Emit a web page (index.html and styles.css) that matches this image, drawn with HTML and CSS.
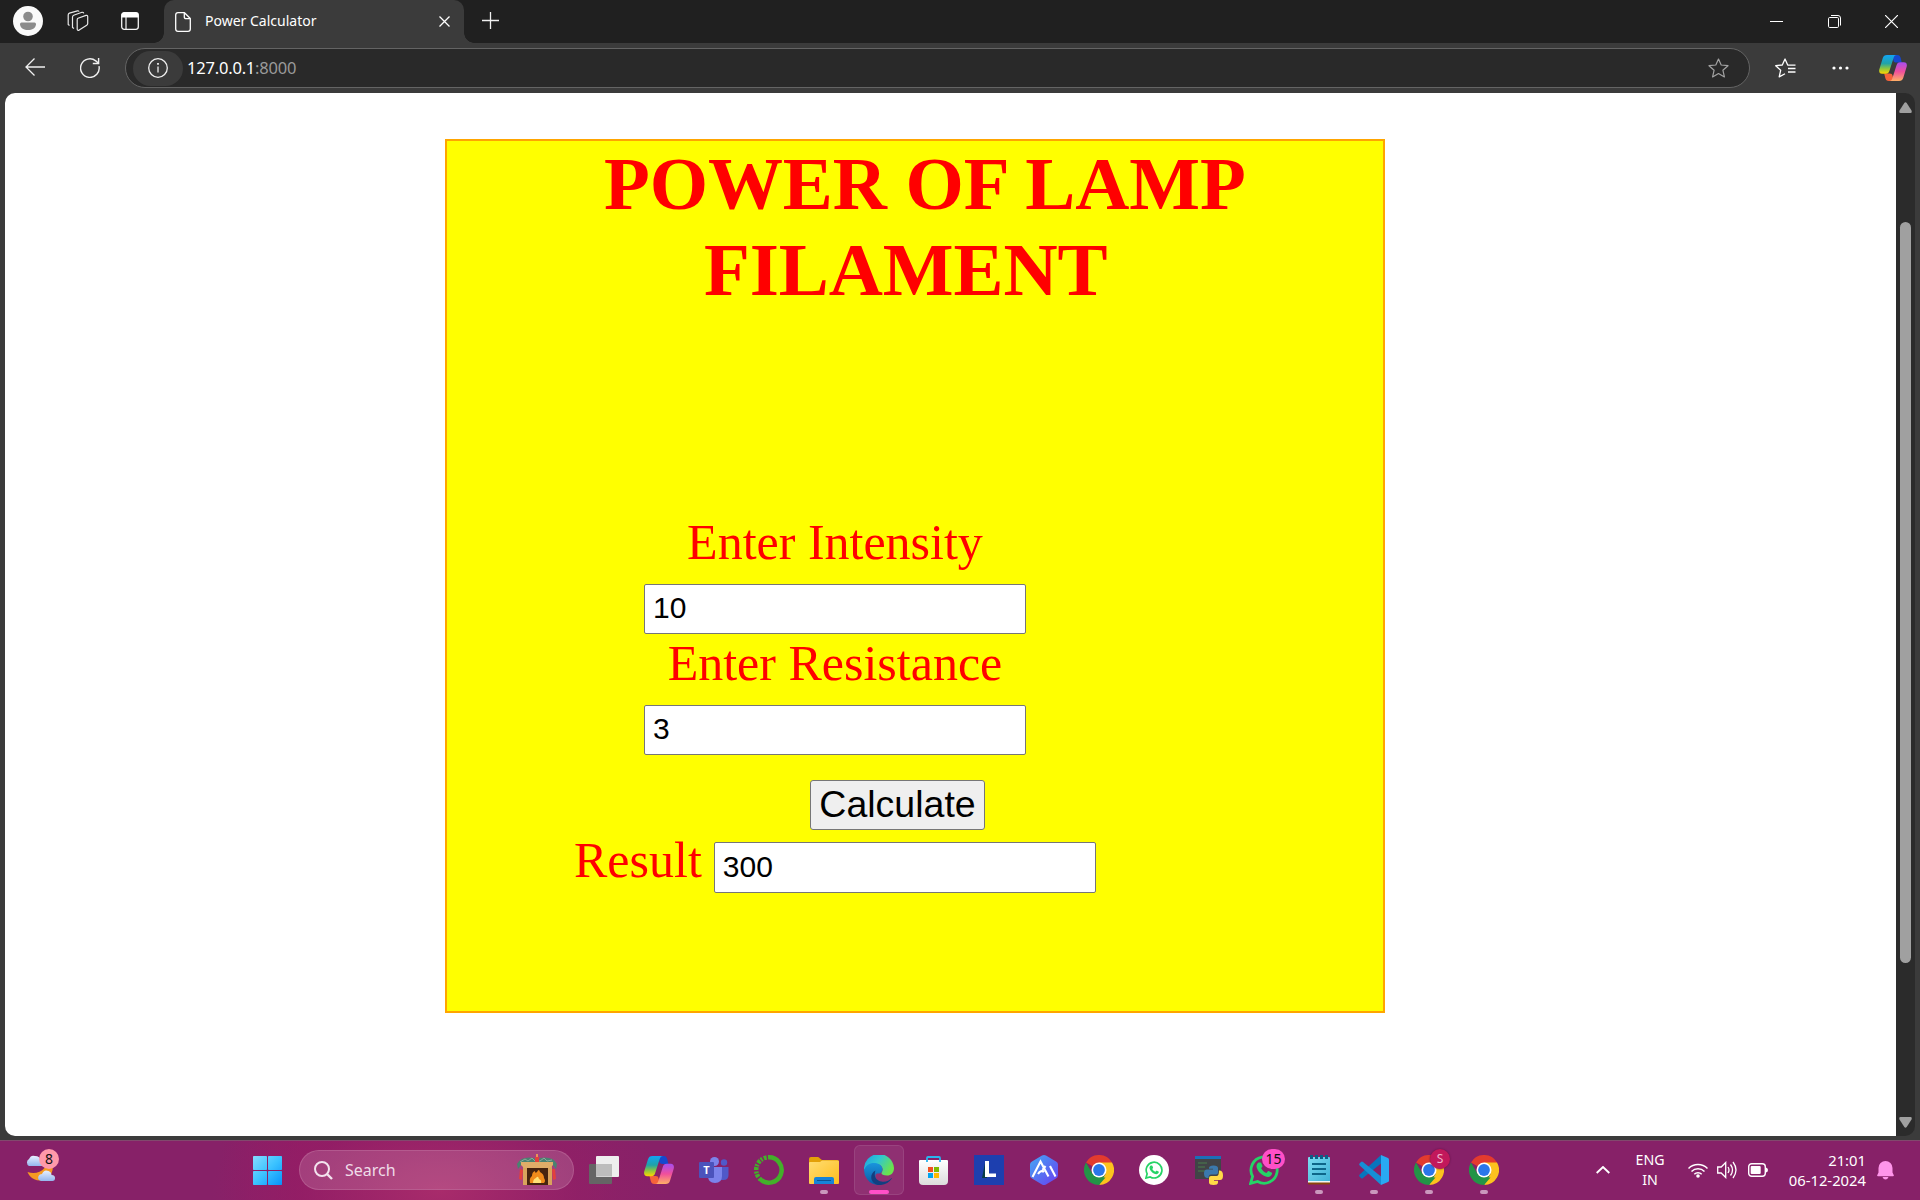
FILE: index.html
```html
<!DOCTYPE html>
<html lang="en">
<head>
<meta charset="utf-8">
<title>Power Calculator</title>
<link rel="stylesheet" href="styles.css">
</head>
<body>
<svg class="defs" aria-hidden="true">
  <defs>
    <linearGradient id="cpA" x1="0" y1="0" x2="0" y2="1"><stop offset="0" stop-color="#12a4f4"/><stop offset=".45" stop-color="#20a3a8"/><stop offset=".72" stop-color="#8cc63f"/><stop offset="1" stop-color="#ffd500"/></linearGradient>
    <linearGradient id="cpB" x1="0" y1="0" x2="0" y2="1"><stop offset="0" stop-color="#a64df0"/><stop offset=".5" stop-color="#f04f9c"/><stop offset="1" stop-color="#ffb066"/></linearGradient>
    <linearGradient id="edA" x1="0" y1="0" x2="1" y2=".5"><stop offset="0" stop-color="#1b9de2"/><stop offset=".5" stop-color="#30c6d2"/><stop offset="1" stop-color="#6be34d"/></linearGradient>
    <linearGradient id="edB" x1="0" y1="0" x2="0" y2="1"><stop offset="0" stop-color="#1995dd"/><stop offset="1" stop-color="#0c59a4"/></linearGradient>
    <linearGradient id="win" gradientUnits="userSpaceOnUse" x1="0" y1="0" x2="29" y2="29"><stop offset="0" stop-color="#86dcff"/><stop offset=".5" stop-color="#3cc3ff"/><stop offset="1" stop-color="#0791fb"/></linearGradient>
    <linearGradient id="hex" x1="0" y1="0" x2="1" y2="1"><stop offset="0" stop-color="#42a9f5"/><stop offset="1" stop-color="#6a3df0"/></linearGradient>
    <linearGradient id="fold" x1="0" y1="0" x2="1" y2="1"><stop offset="0" stop-color="#ffdd73"/><stop offset="1" stop-color="#ffbd1c"/></linearGradient>
    <linearGradient id="note" x1="0" y1="0" x2="1" y2="1"><stop offset="0" stop-color="#7cdcf2"/><stop offset="1" stop-color="#3fb2d6"/></linearGradient>
    <linearGradient id="cloud" x1="0" y1="0" x2="0" y2="1"><stop offset="0" stop-color="#e9f1ff"/><stop offset="1" stop-color="#94b6ee"/></linearGradient>
    <linearGradient id="bag" x1="0" y1="0" x2="0" y2="1"><stop offset="0" stop-color="#fff"/><stop offset="1" stop-color="#dcdcdc"/></linearGradient>
  </defs>
  <symbol id="copilot" viewBox="0 0 30 28">
    <path d="M16 0h3.500c2.300 0 3.200 1.200 3.800 3.300L24.400 8h-5.700c-2 0-2.900-.7-3.200-2.200L14.600 2z" fill="#1648cf"/>
    <path d="M13.500 28h-3c-2.300 0-3.200-1.200-3.800-3.300L5.500 20h6c2 0 2.700.9 3 2.200l1 4z" fill="#f5623a"/>
    <path d="M8.500 0H19c-2 0-2.800 1.300-3.400 3.300L11.200 17c-.7 2.200-1.700 3.200-4 3.200H3.300C.5 20.200-.4 18 .3 15.300L4 3.300C4.700 1.200 6 0 8.500 0z" fill="url(#cpA)"/>
    <path d="M21.500 28H11c2 0 2.800-1.300 3.400-3.300L18.800 11c.7-2.200 1.700-3.200 4-3.200h3.900c2.800 0 3.700 2.200 3 4.900L26 24.700c-.7 2.100-2 3.300-4.500 3.300z" fill="url(#cpB)"/>
  </symbol>
  <symbol id="chrome" viewBox="0 0 30 30">
    <path d="M15 15L2 7.500A15 15 0 0 1 28 7.500z" fill="#e33b2e"/>
    <path d="M15 7.500H28A15 15 0 0 1 15 30L21.500 18.800z" fill="#fcc31e"/>
    <path d="M2 7.500L8.500 18.800 15 22.500h6.500L15 30A15 15 0 0 1 2 7.500z" fill="#239447"/>
    <path d="M21.500 18.700L15 30l-2-8z" fill="#239447"/>
    <circle cx="15" cy="15" r="7.500" fill="#fff"/><circle cx="15" cy="15" r="5.900" fill="#2a76ea"/>
  </symbol>
  <symbol id="whatsapp" viewBox="0 0 30 30">
    <path d="M1.600 28.400l2-7A13.100 13.100 0 1 1 8.600 26.500z" fill="none" stroke="#25d366" stroke-width="2.800"/>
    <path d="M9.500 7.500h2c.5 0 .7.400.9.900l1 2.400c.2.500 0 .9-.3 1.300l-1 1.200c1.400 2.400 3 3.700 5.300 4.700l1.300-1.600c.4-.4.800-.4 1.300-.2l2.500 1.200c.6.300.7.600.5 1.400-.4 2-2.400 3.300-4.300 3.100-5.200-.7-9.800-5.200-11-9.500-.5-2 .4-3.900 1.800-4.900z" fill="#25d366"/>
  </symbol>
</svg>

<div class="window">
  <header class="tabbar">
    <div class="tab-tools">
      <svg width="30" height="30" viewBox="0 0 30 30"><circle cx="15" cy="15" r="15" fill="#fafafa"/><circle cx="15" cy="10.500" r="4.800" fill="#8b8b8b"/><path d="M8.500 16.500h13q1.500 0 1.500 1.700C22.500 22.500 19 24 15 24s-7.500-1.500-8-5.800q0-1.700 1.500-1.700z" fill="#8b8b8b"/></svg>
      <svg class="ws" width="22" height="22" viewBox="0 0 22 22" fill="none" stroke="#e8e8e8" stroke-width="1.200" stroke-linejoin="round"><path d="M11 8.300l8-2.900q1.700-.4 1.700 1.200v6.800q0 1.200-1 1.800l-7.500 4.900q-2 .9-2-1V9.800q0-1.200.8-1.500z"/><path d="M7 18.500l-1.500-1V7.200q0-1.500 1.200-2L15 2.300q1.500-.3 1.700 1"/><path d="M2.500 15.500L1.200 14.500V5q0-1.400 1.200-1.900L10.500.8q1.300-.3 1.300.9"/></svg>
      <svg class="vt" width="18" height="18" viewBox="0 0 18 18"><rect x=".7" y=".7" width="16.600" height="16.600" rx="2.500" fill="none" stroke="#f4f4f4" stroke-width="1.300"/><path d="M.5 5.500V3Q.5.500 3 .5h12q2.500 0 2.500 2.500v2.500z" fill="#fff"/><path d="M5 5v12" stroke="#f4f4f4" stroke-width="1.200"/></svg>
    </div>
    <div class="tab">
      <svg width="16" height="20" viewBox="0 0 16 20" fill="none" stroke="#fff" stroke-width="1.300" stroke-linejoin="round"><path d="M3 .7h6.500L15.300 6.500V17q0 2.300-2.300 2.300H3Q.7 19.300.7 17V3Q.7.700 3 .7z"/><path d="M9.300.9V5q0 1.700 1.700 1.700h4"/></svg>
      <span class="tab-title">Power Calculator</span>
      <svg class="tab-close" width="11" height="11" viewBox="0 0 11 11" stroke="#fff" stroke-width="1.300"><path d="M.5.500l10 10M10.500.500l-10 10"/></svg>
    </div>
    <svg class="new-tab" width="17" height="17" viewBox="0 0 17 17" stroke="#f0f0f0" stroke-width="1.300"><path d="M8.500 0v17M0 8.500h17"/></svg>
    <div class="caption">
      <svg width="13" height="13" viewBox="0 0 13 13" stroke="#fff"><path d="M0 6.500h13"/></svg>
      <svg width="13" height="13" viewBox="0 0 13 13" fill="none" stroke="#fff"><rect x=".5" y="2.500" width="10" height="10" rx="1.200"/><path d="M3 .5h7q2.500 0 2.500 2.500v7.500"/></svg>
      <svg width="13" height="13" viewBox="0 0 13 13" stroke="#fff" stroke-width="1.200"><path d="M0 0l13 13M13 0L0 13"/></svg>
    </div>
  </header>

  <nav class="toolbar">
    <svg class="back" width="20" height="18" viewBox="0 0 20 18" fill="none" stroke="#f0f0f0" stroke-width="1.300"><path d="M20 9H1M9.500.5L1 9l8.500 8.500"/></svg>
    <svg class="reload" width="20" height="20" viewBox="0 0 20 20" fill="none" stroke="#f0f0f0" stroke-width="1.400"><path d="M19 8.200A9.300 9.300 0 1 1 15.800 2.900L18.500 5.300"/><path d="M18.600 0v5.500h-5.800"/></svg>
    <div class="address">
      <div class="info"><svg width="20" height="20" viewBox="0 0 20 20" fill="none" stroke="#f0f0f0" stroke-width="1.300"><circle cx="10" cy="10" r="9.300"/><path d="M10 8.500v6"/><path d="M10 5v1.800" stroke-width="1.800"/></svg></div>
      <span class="url">127.0.0.1<span class="port">:8000</span></span>
      <svg class="fav" width="21" height="20" viewBox="0 0 21 20" fill="none" stroke="#a2a2a2" stroke-width="1.200" stroke-linejoin="round"><path d="M10.500 1l2.700 6 6.800.7-5.100 4.500 1.500 6.700-5.900-3.400-5.900 3.400 1.500-6.700L1 7.700 7.800 7z"/></svg>
    </div>
    <svg class="favs" width="21" height="20" viewBox="0 0 21 20" fill="none" stroke="#fff" stroke-width="1.300" stroke-linejoin="round"><path d="M14.500 7.100L12.700 7 10 1 7.300 7 .7 7.700l5 4.500-1.500 6.700L10 15.700M13 10.500h7.500M14 7.200l6.500 0M13 14h7.500"/></svg>
    <svg class="more" width="17" height="4" viewBox="0 0 17 4" fill="#fff"><circle cx="2" cy="2" r="1.600"/><circle cx="8.500" cy="2" r="1.600"/><circle cx="15" cy="2" r="1.600"/></svg>
    <svg class="cp" width="28" height="26"><use href="#copilot"/></svg>
  </nav>

  <div class="viewport">
    <main class="page">
      <section class="box">
        <h1><span class="line1">POWER OF LAMP</span><span class="line2">FILAMENT</span></h1>
        <form class="form">
          <label for="i">Enter Intensity</label>
          <input id="i" type="text" value="10">
          <label for="r">Enter Resistance</label>
          <input id="r" type="text" value="3">
        </form>
        <button type="button">Calculate</button>
        <div class="result"><label for="p">Result</label><input id="p" type="text" value="300"></div>
      </section>
    </main>
    <div class="scrollbar">
      <svg width="13" height="11" viewBox="0 0 13 11" fill="#a0a0a0"><path d="M5.300 1Q6.500-.5 7.700 1L12.500 8.500Q13.300 11 11.500 11h-10Q-.3 11 .5 8.500z"/></svg>
      <div class="thumb"></div>
      <svg width="13" height="11" viewBox="0 0 13 11" fill="#a0a0a0"><path d="M5.300 10Q6.500 11.500 7.700 10L12.500 2.500Q13.300 0 11.500 0h-10Q-.3 0 .5 2.500z"/></svg>
    </div>
  </div>

  <footer class="taskbar">
    <div class="weather">
      <svg width="32" height="30" viewBox="0 0 32 30"><path d="M27 10a13 13 0 0 1-24.500 9c6 2 13 1 17-4 2-2 3-4 3-7q5-4 4.500 2z" fill="#f59a22"/><path d="M4 13a4 4 0 0 1 0-7Q6 1.500 10 3q5 0 6 4.500 2 1 1.500 5.500z" fill="url(#cloud)"/><path d="M16 28q-4-1-2.500-5 1-2 3.500-2 2-5 6.500-3 3 1 3 4 4 0 3.500 4-.3 2-2.500 2z" fill="url(#cloud)"/></svg>
      <span class="badge pink8">8</span>
    </div>
    <svg class="start" width="29" height="29" viewBox="0 0 29 29" fill="url(#win)"><rect width="14" height="14" rx=".7"/><rect x="15" width="14" height="14" rx=".7"/><rect y="15" width="14" height="14" rx=".7"/><rect x="15" y="15" width="14" height="14" rx=".7"/></svg>
    <div class="search">
      <svg width="19" height="19" viewBox="0 0 19 19" fill="none" stroke="#f3e3ee" stroke-width="2"><circle cx="8" cy="8" r="7"/><path d="M13 13l5 5" stroke-width="2.400"/></svg>
      <span>Search</span>
      <svg class="fire" width="42" height="32" viewBox="0 0 42 32"><rect x="7" y="12" width="29" height="19" fill="#d9a35c"/><rect x="11" y="14" width="21" height="17" fill="#46240f"/><path d="M14 29q-1-5 2-7 0-4 3-5 0 3 2 1 2-4 3 0 4 2 4 6 2 3 0 5z" fill="#f08b1b"/><path d="M17 29q0-4 3-5 2-3 3 1 3 1 2 4z" fill="#ffe277"/><path d="M1 10Q5 2 18 4l3 4 3-4q13-2 17 6l-1 5-4-5H6l-4 5z" fill="#4a8270"/><path d="M5 8h32v3l-3 3H8l-3-3z" fill="#e0ad68"/><path d="M4 8l5-3 3 2 4-3 3 3h5l4-3 3 3 5-1" stroke="#8da89b" fill="none"/><path d="M19 3h4v5h-4zM4 15l3 1-1 10-3-1zM36 15h3l1 10-3 1z" fill="#e23f3c"/><path d="M21 0v3" stroke="#ffb04a" stroke-width="1.500"/></svg>
    </div>
    <div class="apps">
      <div class="app"><svg width="30" height="28" viewBox="0 0 30 28"><rect y="8" width="23" height="20" rx="1" fill="#656565"/><rect x="7" width="23" height="21" rx="1" fill="#eee"/><path d="M7 8h16v12.500H7z" fill="#bdbdbd"/></svg></div>
      <div class="app"><svg width="30" height="28"><use href="#copilot"/></svg></div>
      <div class="app"><svg width="30" height="28" viewBox="0 0 30 28"><circle cx="15.500" cy="5.500" r="4.500" fill="#7b83eb"/><circle cx="25" cy="6.500" r="3.200" fill="#5059c9"/><path d="M21 11h8.500v8q0 5-5 5H21z" fill="#5059c9"/><path d="M9 11h14v9q0 7-7 7t-7-7z" fill="#7b83eb"/><rect y="6" width="15" height="16" rx="1" fill="#4b53bc"/><text x="7.500" y="17.500" text-anchor="middle" font-family="Open Sans" font-weight="700" font-size="11" fill="#fff">T</text></svg></div>
      <div class="app"><svg width="30" height="30" viewBox="0 0 30 30" fill="none" stroke="#43b02a" stroke-width="4.500"><path d="M14 2.300A12.700 12.700 0 1 1 6 24"/><path d="M6.500 24.500A12.700 12.700 0 0 1 13 2.400" stroke-dasharray="1.800 1.500 3 1"/></svg></div>
      <div class="app open"><svg width="30" height="28" viewBox="0 0 30 28"><path d="M0 3q0-2 2-2h7q1 0 2 1.500L13 4h15q2 0 2 2v6H0z" fill="#e3a008"/><path d="M0 7q0-1 1-1h10l2-1.500h16q1 0 1 1V27q0 1-1 1H1q-1 0-1-1z" fill="url(#fold)"/><path d="M5 28v-5q0-2 2-2h16q2 0 2 2v5z" fill="#1683d8"/><path d="M8 24.500h14" stroke="#0b5293"/></svg></div>
      <div class="app active"><svg width="30" height="30" viewBox="0 0 30 30"><path d="M0 15A15 15 0 0 1 30 13c0 5-3 7.500-7 7.500-5 0-6.500-1.500-5-3.500 2-4-1-8-6.500-8Q4 9 0 15z" fill="url(#edA)"/><path d="M0 15C2 10 6 7.500 11 8c6 .5 9 5 6.500 9-2 3-5 0-6 3-1 3 3 9 6 9.800Q8 31 3 24 0 20 0 15z" fill="url(#edB)"/><path d="M11.500 15.500c-2 5 0 10 6 11 4 .7 8-.8 10-3.500q.5 0 .3.500C25 28 20 30.500 14 30 6 28 5 19 11.500 15.500z" fill="#123f80"/></svg></div>
      <div class="app"><svg width="29" height="29" viewBox="0 0 29 29"><path d="M0 5q0-1 1-1h27q1 0 1 1v20q0 4-4 4H4q-4 0-4-4z" fill="url(#bag)"/><path d="M8 6V2q0-1 1-1h11q1 0 1 1v4" fill="none" stroke="#28b5ee" stroke-width="1.800"/><path d="M9 11h5v5H9z" fill="#f25022"/><path d="M15 11h5v5h-5z" fill="#7fba00"/><path d="M9 17h5v5H9z" fill="#00a4ef"/><path d="M15 17h5v5h-5z" fill="#ffb900"/></svg></div>
      <div class="app"><svg width="30" height="30" viewBox="0 0 30 30"><path d="M0 0h30v30H0z" fill="#1d3faf"/><path d="M11 8L8 23h5V7z" fill="#063b45"/><path d="M11 6h4v12.500h7V22H11z" fill="#fff"/></svg></div>
      <div class="app"><svg width="28" height="30" viewBox="0 0 28 30"><path d="M12 .5q2-1 4 0l10 6q2 1 2 3v11q0 2-2 3l-10 6q-2 1-4 0l-10-6q-2-1-2-3v-11q0-2 2-3z" fill="url(#hex)"/><path d="M2.500 22L10.500 6.500l8 15M8 19q3-4.500 6-2M12.500 15l3-4M20 11l5.500 10.500" fill="none" stroke="#fff" stroke-width="2.100"/></svg></div>
      <div class="app"><svg width="30" height="30"><use href="#chrome"/></svg></div>
      <div class="app"><svg width="30" height="30" viewBox="0 0 30 30"><circle cx="15" cy="15" r="15" fill="#fff"/><use href="#whatsapp" x="6" y="6" width="18" height="18"/></svg></div>
      <div class="app"><svg width="30" height="30" viewBox="0 0 30 30"><path d="M1 2h26v22H1z" fill="#414447"/><path d="M1 1h26v3H1z" fill="#1b6fb8"/><path d="M4 8h9M4 12h7M4 16h8" stroke="#4b7f4c"/><path d="M15 13q0-2.500 4.500-2.500T24 13v4.500q0 2-2 2h-5q-2.500 0-2.500 3.500h-1.500q-3-.5-3-4.500t3-4h6v-.8h-4z" fill="#3b79ad"/><path d="M24 27.500q0 2.500-4.500 2.500T15 27.500V23q0-2 2-2h5.500q2.500 0 2.500-5.500h1q3 .5 3 5t-3 4.500h-6v.8h4z" fill="#ffda47"/></svg></div>
      <div class="app"><svg width="30" height="30"><use href="#whatsapp"/></svg><span class="badge pink15">15</span></div>
      <div class="app open"><svg width="22" height="30" viewBox="0 0 22 30"><path d="M0 27h22v1.500q0 1-1 1H1q-1 0-1-1z" fill="#8b450c"/><path d="M0 25h22v2.500H0z" fill="#f3f3f3"/><path d="M0 3q0-1 1-1h20q1 0 1 1v23H0z" fill="url(#note)"/><path d="M3.500 0v4M8.500 0v4M13.500 0v4M18.500 0v4" stroke="#0d5c87" stroke-width="3"/><path d="M4 9h14M4 14h14M4 19h14" stroke="#0d6689" stroke-width="1.900"/></svg></div>
      <div class="app open"><svg width="30" height="30" viewBox="0 0 30 30"><path d="M22 0v8.500L4 23Q3 24 2 23L.5 21.500Q-.3 20.500.7 19.600z" fill="#0875bd"/><path d="M22 30v-8.500L4 7Q3 6 2 7L.5 8.500Q-.3 9.500.7 10.400z" fill="#168ed5"/><path d="M22 0l7 3q1 .5 1 1.500v21q0 1-1 1.500l-7 3z" fill="#29a9f2"/></svg></div>
      <div class="app open"><svg width="30" height="30"><use href="#chrome"/></svg><span class="badge s">S</span></div>
      <div class="app open"><svg width="30" height="30"><use href="#chrome"/></svg></div>
    </div>
    <div class="tray">
      <svg class="chev" width="14" height="8" viewBox="0 0 14 8" fill="none" stroke="#fff" stroke-width="1.900"><path d="M.7 7L7 1l6.300 6"/></svg>
      <div class="lang">ENG<br>IN</div>
      <svg class="wifi" width="20" height="16" viewBox="0 0 20 16" fill="none" stroke="#fff" stroke-width="1.500"><path d="M.5 6.500a13.500 13.500 0 0 1 19 0M3.500 9.500a9.200 9.200 0 0 1 13 0M6.300 12.300a5.200 5.200 0 0 1 7.400 0"/><circle cx="10" cy="14" r="1.800" fill="#fff" stroke="none"/></svg>
      <svg class="vol" width="20" height="18" viewBox="0 0 20 18" fill="none" stroke="#fff" stroke-width="1.300"><path d="M.7 6h3.500l4.500-4.500v15L4.200 12H.7z"/><path d="M11 6q2 3 0 6M13.500 3.500q4 5.500 0 11M16 1q6 8 0 16"/></svg>
      <svg class="bat" width="20" height="14" viewBox="0 0 20 14"><rect x=".7" y=".7" width="16.600" height="12.600" rx="3" fill="none" stroke="#fff" stroke-width="1.400"/><rect x="2.700" y="3" width="10" height="8" rx="1" fill="#fff"/><path d="M18 4.500q2 .5 2 2.500t-2 2.500z" fill="#fff"/></svg>
      <div class="clock">21:01<br>06-12-2024</div>
      <svg class="bell" width="17" height="20" viewBox="0 0 17 20" fill="#ff95ea"><path d="M1.500 8a7 7 0 0 1 14 0v4.500l1.300 2.700q.3 1-.8 1H1q-1.100 0-.8-1l1.300-2.700zM5.500 17h6q-1 2.500-3 2.500t-3-2.500z"/></svg>
    </div>
  </footer>
</div>
</body>
</html>
```
FILE: styles.css
```css
* { box-sizing: border-box; }
body { margin: 0; overflow: hidden; font-family: "Noto Sans", sans-serif; }
svg { display: block; flex: none; }
.defs { position: absolute; width: 0; height: 0; }

.window { width: 1920px; height: 1200px; display: flex; flex-direction: column; background: #3b3b3b; }

/* Tab strip */
.tabbar { height: 43px; display: flex; background: #202020; flex: none; }
.tab-tools { width: 164px; display: flex; padding: 6px 0 0 13px; }
.ws { margin: 4px 0 0 24px; }
.vt { margin: 6px 0 0 32px; }
.tab { position: relative; width: 300px; display: flex; align-items: center; padding: 0 14px 0 11px; background: #3b3b3b; border-radius: 10px 10px 0 0; }
.tab::before, .tab::after { content: ""; position: absolute; bottom: 0; width: 10px; height: 10px; }
.tab::before { left: -10px; background: radial-gradient(circle at 0 0, #202020 9.5px, #3b3b3b 10px); }
.tab::after { right: -10px; background: radial-gradient(circle at 100% 0, #202020 9.5px, #3b3b3b 10px); }
.tab-title { margin: -2px 0 0 14px; color: #fff; font-size: 14px; white-space: nowrap; }
.tab-close { margin-left: auto; }
.new-tab { margin: 12px 0 0 18px; }
.caption { margin: 15px 22px 0 auto; display: flex; gap: 44.5px; }

/* Navigation row */
.toolbar { height: 50px; display: flex; align-items: center; flex: none; }
.back { margin-left: 25px; margin-top: -2px; }
.reload { margin-left: 35px; }
.address { width: 1625px; height: 40px; margin-left: 25px; display: flex; align-items: center; padding: 0 20px 0 7px; border: 1px solid #646464; border-radius: 20px; background: #292929; }
.info { width: 50px; height: 35px; display: flex; align-items: center; justify-content: center; background: #3b3b3b; border-radius: 18px; }
.url { margin: -2px 0 0 4px; color: #fff; font-size: 16.5px; letter-spacing: -.2px; }
.port { color: #9a9a9a; }
.fav { margin-left: auto; }
.favs { margin-left: 25px; }
.more { margin-left: 36px; }
.cp { margin-left: 30px; }

/* Page area */
.viewport { height: 1043px; margin: 0 5px; display: flex; background: #2b2b2b; border-radius: 10px; flex: none; }
.page { width: 1891px; padding: 46px 0 0 440px; background: #fff; border-radius: 10px 0 0 10px; }
.box { width: 940px; height: 874px; border: 2px solid orange; background: #ff0; color: red; font-family: "Liberation Serif", "Times New Roman", serif; font-size: 50px; }
h1 { margin: 0; font-size: 75px; line-height: 86px; letter-spacing: -.1px; display: flex; flex-direction: column; align-items: flex-start; }
.line1 { margin-left: 157px; }
.line2 { margin-left: 257px; }
.form { width: 382px; margin: 200px 0 0 197px; display: flex; flex-direction: column; align-items: center; }
label { line-height: 58px; height: 71px; }
input { display: block; width: 382px; height: 50px; margin: 0; padding: 0 8px 2px; border: 1px solid #767676; border-radius: 2px; background: #fff; color: #000; font: 30px "Liberation Sans", Arial, sans-serif; outline: none; }
button { display: block; width: 175px; height: 50px; margin: 25px 0 0 363px; padding: 0 0 2px; border: 1px solid #767676; border-radius: 3px; background: #efefef; color: #000; font: 37.5px "Liberation Sans", Arial, sans-serif; line-height: 46px; }
.result { display: flex; margin: 12px 0 0 127px; gap: 12px; }
.result label { margin-top: -11px; }
.result input { height: 51px; }
.scrollbar { width: 19px; display: flex; flex-direction: column; align-items: center; padding: 9px 0 8px; }
.thumb { width: 11px; height: 741px; margin: 109px 0 auto; border-radius: 6px; background: #a0a0a0; }

/* Taskbar */
.taskbar { height: 60px; margin-top: 4px; display: flex; position: relative; color: #fff; border-top: 1px solid #81496d; background: radial-gradient(ellipse 230px 120px at 440px 50px, #a82b6b, #96206688 60%, transparent), linear-gradient(90deg, #872168 220px, #901b65 300px, #872168 620px); }
.weather { position: relative; width: 32px; margin: 12px 0 0 25px; }
.badge { position: absolute; height: 20px; border-radius: 10px; text-align: center; font-size: 14px; line-height: 20px; color: #111; }
.pink8 { left: 14px; top: -4px; width: 20px; background: #ff99aa; }
.start { margin: 15px 0 0 196px; }
.search { width: 275px; height: 40px; margin: 9px 0 0 17px; display: flex; align-items: center; padding: 0 15px 0 14px; border: 1px solid #c06f9d88; border-radius: 20px; background: rgba(255,255,255,.15); color: #efdce8; font-size: 16px; }
.search span { margin-left: 12px; }
.fire { margin-left: auto; }
.apps { display: flex; margin-left: 2px; }
.app { position: relative; width: 55px; height: 58px; display: flex; align-items: center; justify-content: center; }
.open::after { content: ""; position: absolute; left: 24px; bottom: 5px; width: 8px; height: 4px; border-radius: 2px; background: #ca98bd; }
.active { width: 50px; height: 50px; margin: 4px 2.5px; border: 1px solid #ffffff18; border-radius: 6px; background: #ffffff12; }
.active::after { content: ""; position: absolute; left: 14px; bottom: 0; width: 20px; height: 4px; border-radius: 2px; background: #ff4fc8; }
.pink15 { left: 26px; top: 8px; width: 23px; background: #ff4fc8; }
.s { left: 29px; top: 8px; width: 20px; background: #c2185b; color: #efb5cd; font-size: 12px; box-shadow: 0 0 2px #5c1040; }
.tray { margin: 0 26px 0 auto; display: flex; align-items: center; font-size: 14.2px; line-height: 20px; height: 60px; white-space: nowrap; }
.tray svg { margin-top: -2px; }
.lang { margin: -2px 0 0 24px; width: 32px; text-align: center; }
.wifi { margin-left: 22px; }
.vol { margin-left: 9px; }
.bat { margin-left: 11px; }
.clock { width: 84px; margin: -2px 0 0 14px; font-size: 14.8px; text-align: right; }
.bell { margin-left: 11px; }
```
